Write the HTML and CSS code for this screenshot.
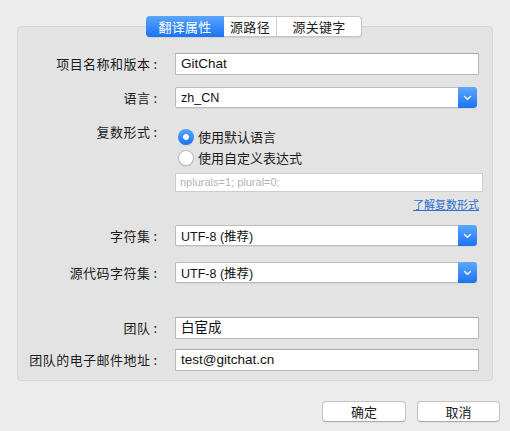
FILE: index.html
```html
<!DOCTYPE html>
<html lang="zh-CN">
<head>
<meta charset="utf-8">
<link rel="stylesheet" href="styles.css">
</head>
<body>
<div class="window">
  <div class="tabs">
    <div class="tab active">翻译属性</div>
    <div class="tab t2">源路径</div>
    <div class="tab t3">源关键字</div>
  </div>
  <div class="panel">
    <div class="row r1">
      <div class="label">项目名称和版本<span class="colon">:</span></div>
      <div class="input">GitChat</div>
    </div>
    <div class="row r2">
      <div class="label">语言<span class="colon">:</span></div>
      <div class="select"><span class="val">zh_CN</span><span class="btn"><svg width="9" height="6" viewBox="0 0 9 6"><path d="M1.5 1.5 L4.5 4.3 L7.5 1.5" fill="none" stroke="#fff" stroke-width="1.4" stroke-linecap="round" stroke-linejoin="round"/></svg></span></div>
    </div>
    <div class="row r3">
      <div class="label plabel">复数形式<span class="colon">:</span></div>
      <div class="radios">
        <div class="radio on"><span class="dot"></span>使用默认语言</div>
        <div class="radio"><span class="dot"></span>使用自定义表达式</div>
        <div class="expr">nplurals=1; plural=0;</div>
        <div class="linkrow"><span class="link">了解复数形式</span></div>
      </div>
    </div>
    <div class="row r4">
      <div class="label">字符集<span class="colon">:</span></div>
      <div class="select"><span class="val">UTF-8 (推荐)</span><span class="btn"><svg width="9" height="6" viewBox="0 0 9 6"><path d="M1.5 1.5 L4.5 4.3 L7.5 1.5" fill="none" stroke="#fff" stroke-width="1.4" stroke-linecap="round" stroke-linejoin="round"/></svg></span></div>
    </div>
    <div class="row r5">
      <div class="label">源代码字符集<span class="colon">:</span></div>
      <div class="select"><span class="val">UTF-8 (推荐)</span><span class="btn"><svg width="9" height="6" viewBox="0 0 9 6"><path d="M1.5 1.5 L4.5 4.3 L7.5 1.5" fill="none" stroke="#fff" stroke-width="1.4" stroke-linecap="round" stroke-linejoin="round"/></svg></span></div>
    </div>
    <div class="row r6">
      <div class="label">团队<span class="colon">:</span></div>
      <div class="input">白宦成</div>
    </div>
    <div class="row r7">
      <div class="label">团队的电子邮件地址<span class="colon">:</span></div>
      <div class="input">test@gitchat.cn</div>
    </div>
  </div>
  <div class="buttons">
    <div class="button ok">确定</div>
    <div class="button cancel">取消</div>
  </div>
</div>
</body>
</html>
```
FILE: styles.css
```css
* { box-sizing: border-box; }
html, body { margin: 0; padding: 0; }
body {
  width: 510px;
  height: 431px;
  background: #ececec;
  font-family: "Liberation Sans", "Noto Sans CJK SC", sans-serif;
  font-size: 13px;
  color: #1b1b1b;
  overflow: hidden;
}
.window { padding: 16px 17px 0 17px; }
.tabs {
  position: relative;
  z-index: 1;
  display: flex;
  width: 216px;
  height: 21px;
  margin: 0 0 0 129px;
  background: #fff;
  border: 1px solid #c6c6c6;
  border-radius: 4px;
  box-shadow: 0 1px 1px rgba(0,0,0,0.08);
}
.tab {
  display: flex;
  align-items: center;
  justify-content: center;
  height: 19px;
  font-family: "Noto Sans CJK SC", sans-serif;
  font-size: 13px;
  letter-spacing: 0.3px;
  color: #222;
}
.tab.active {
  width: 78px;
  margin: -1px 0 0 -1px;
  height: 21px;
  border-radius: 4px 0 0 4px;
  background: linear-gradient(#5aa6fb, #1a72f2);
  color: #fff;
}
.tab.t2 { width: 53px; border-right: 1px solid #cfcfcf; }
.tab.t3 { flex: 1; }
.panel {
  margin-top: -11px;
  height: 355px;
  background: #e3e3e3;
  border: 1px solid #d6d6d6;
  border-radius: 4px;
  padding-top: 26px;
}
.row { display: flex; align-items: flex-start; }
.label {
  width: 139px;
  text-align: right;
  margin-right: 18px;
  font-family: "Noto Sans CJK SC", sans-serif;
  font-size: 13px;
  letter-spacing: 0.45px;
  line-height: 22px;
  color: #1b1b1b;
  white-space: nowrap;
}
.colon { margin-left: 3px; letter-spacing: 0; }
.input {
  width: 304px;
  height: 22px;
  background: #fff;
  border: 1px solid #b9b9b9;
  border-top-color: #a9a9a9;
  padding: 0 5px;
  line-height: 20px;
  font-size: 13.5px;
  font-family: "Liberation Sans", "Noto Sans CJK SC", sans-serif;
  color: #111;
}
.select {
  position: relative;
  width: 302px;
  height: 21px;
  background: #fff;
  border: 1px solid #bcbcbc;
  border-radius: 2px;
  display: flex;
  align-items: center;
  box-shadow: 0 1px 0 rgba(0,0,0,0.05);
}
.select .val {
  flex: 1;
  padding-left: 5px;
  font-size: 12.5px;
  font-family: "Liberation Sans", "Noto Sans CJK SC", sans-serif;
  color: #111;
}
.select .btn {
  width: 19px;
  height: 21px;
  margin: -1px -1px -1px 0;
  border-radius: 0 4px 4px 0;
  background: linear-gradient(#5da8fb, #1d72f2);
  display: flex;
  align-items: center;
  justify-content: center;
}
.r1 { margin-top: 0; }
.r2 { margin-top: 12px; }
.r3 { margin-top: 17px; }
.plabel { line-height: 20px; margin-top: -4px; }
.radios { display: flex; flex-direction: column; width: 308px; }
.radio {
  display: flex;
  align-items: center;
  height: 21px;
  font-family: "Noto Sans CJK SC", sans-serif;
  font-size: 13px;
  color: #1b1b1b;
}
.radio .dot {
  width: 16px;
  height: 16px;
  border-radius: 50%;
  background: #fff;
  border: 1px solid #b8b8b8;
  margin: 0 4px 0 3px;
  box-shadow: 0 1px 1px rgba(0,0,0,0.08);
}
.radio.on .dot {
  border: none;
  background: radial-gradient(circle, #fff 0 2.6px, transparent 3.2px), linear-gradient(#5aa6fb, #1a72f2);
}
.expr {
  margin-top: 5px;
  height: 19px;
  width: 308px;
  background: #fff;
  border: 1px solid #cdcdcd;
  padding: 0 4px;
  line-height: 17px;
  font-size: 11px;
  color: #b3b3b3;
  font-family: "Liberation Sans", sans-serif;
}
.linkrow {
  display: flex;
  justify-content: flex-end;
  width: 304px;
  margin-top: 4px;
  height: 16px;
}
.link {
  font-family: "Noto Sans CJK SC", sans-serif;
  font-size: 11px;
  line-height: 16px;
  color: #2c6fd0;
  text-decoration: underline;
}
.r4 { margin-top: 13px; }
.r5 { margin-top: 15px; }
.r6 { margin-top: 33px; }
.r7 { margin-top: 10px; }
.buttons {
  display: flex;
  justify-content: flex-end;
  gap: 11px;
  margin-top: 20px;
  margin-right: -7px;
}
.button {
  height: 21px;
  background: #fff;
  border: 1px solid #c2c2c2;
  border-bottom-color: #acacac;
  border-radius: 4px;
  display: flex;
  align-items: center;
  justify-content: center;
  font-family: "Noto Sans CJK SC", sans-serif;
  font-size: 13px;
  color: #1b1b1b;
  box-shadow: 0 1px 0 rgba(0,0,0,0.04);
}
.ok { width: 84px; }
.cancel { width: 83px; }
```
